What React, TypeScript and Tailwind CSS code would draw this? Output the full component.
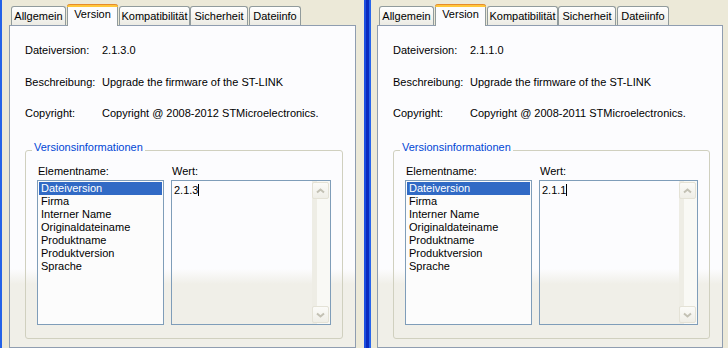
import React from "react";

type PanelProps = { ver: string; year: string; wert: string; wide: boolean };

const items = [
  "Dateiversion",
  "Firma",
  "Interner Name",
  "Originaldateiname",
  "Produktname",
  "Produktversion",
  "Sprache",
];

function Chevron({ down }: { down?: boolean }) {
  return (
    <svg width="9" height="6" viewBox="0 0 9 6" className="block">
      <path
        d={down ? "M1 1.5 L4.5 4.5 L8 1.5" : "M1 4.5 L4.5 1.5 L8 4.5"}
        fill="none"
        stroke="#c3c1b4"
        strokeWidth="2"
      />
    </svg>
  );
}

function ScrollBtn({ down }: { down?: boolean }) {
  return (
    <div className="flex h-[17px] w-[17px] items-center justify-center rounded-[2px] border border-[#e4e2d6] bg-[linear-gradient(to_bottom,#fbfbf8,#efeee7)]">
      <Chevron down={down} />
    </div>
  );
}

function TabRow() {
  const un =
    "flex h-[19px] items-center justify-center rounded-t-[3px] border border-b-0 border-[#919b9c] bg-[linear-gradient(to_bottom,#ffffff,#ecebe4)] leading-[13px]";
  return (
    <div className="flex h-[26px] items-end pl-[2px]">
      <div className={`${un} w-[55px]`}>Allgemein</div>
      <div className="relative z-10 -mb-px ml-px flex h-[22px] w-[51px] flex-col rounded-t-[3px] border-x border-[#919b9c] bg-[#fcfcfe]">
        <div className="-mx-px h-[3px] rounded-t-[3px] border-t border-[#e68b2c] bg-[#ffc73c]" />
        <div className="flex justify-center pt-px leading-[13px]">Version</div>
      </div>
      <div className={`${un} ml-px w-[71px]`}>Kompatibilität</div>
      <div className={`${un} w-[58px]`}>Sicherheit</div>
      <div className={`${un} ml-px w-[52px]`}>Dateiinfo</div>
    </div>
  );
}

function Panel({ ver, year, wert, wide }: PanelProps) {
  return (
    <div className={`flex shrink-0 flex-col ${wide ? "w-[347px]" : "w-[346px]"}`}>
      <TabRow />
      <div className="h-[330px] border border-[#8f9db0] bg-[linear-gradient(to_bottom,#fcfcfe_243px,#f0efe8_258px)]">
        <div className="flex flex-col pl-[15px] pt-[18px] leading-[13px]">
          <div className="flex">
            <div className="w-[77px]">Dateiversion:</div>
            <div>{ver}</div>
          </div>
          <div className="mt-[19px] flex">
            <div className="w-[77px]">Beschreibung:</div>
            <div>Upgrade the firmware of the ST-LINK</div>
          </div>
          <div className="mt-[18px] flex">
            <div className="w-[77px]">Copyright:</div>
            <div>Copyright @ 2008-{year} STMicroelectronics.</div>
          </div>
        </div>
        <div className="relative ml-[15px] mr-[12px] mt-[30px] h-[189px] rounded-[3px] border border-[#d0d0bf] px-[11px] pt-[14px]">
          <span className="absolute left-[6px] top-[-10px] bg-[#fcfcfe] px-[2px] leading-[13px] text-[#0046d5]">
            Versionsinformationen
          </span>
          <div className="flex gap-[7px]">
            <div className="w-[127px] shrink-0">
              <div className="mb-[2px] pl-px leading-[13px]">Elementname:</div>
              <div className="h-[145px] border border-[#7f9db9] bg-[#fcfcfc] px-px pt-px">
                {items.map((it, i) => (
                  <div
                    key={it}
                    className={`h-[13px] pl-[2px] leading-[13px] ${
                      i === 0 ? "bg-[#316ac5] text-white" : ""
                    }`}
                  >
                    {it}
                  </div>
                ))}
              </div>
            </div>
            <div className="min-w-0 flex-1">
              <div className="mb-[2px] pl-px leading-[13px]">Wert:</div>
              <div className="flex h-[145px] border border-[#7f9db9]">
                <div className="flex-1 pl-[2px] pt-[3px] leading-[13px]">
                  {wert}
                  <span className="inline-block h-[12px] w-px bg-black align-[-2px]" />
                </div>
                <div className="flex w-[18px] flex-col justify-between bg-[linear-gradient(to_right,#eeede5_5px,#f9f9f5_5px)] py-px pr-px">
                  <ScrollBtn />
                  <ScrollBtn down />
                </div>
              </div>
            </div>
          </div>
        </div>
      </div>
    </div>
  );
}

export default function App() {
  return (
    <div className="flex h-[348px] w-[728px] overflow-hidden bg-[#ece9d8] font-['Liberation_Sans',Arial,sans-serif] text-[11px] text-black">
      <div className="w-[2px] shrink-0 bg-[#2462e8]" />
      <div className="w-[7px] shrink-0" />
      <Panel ver="2.1.3.0" year="2012" wert="2.1.3" wide />
      <div className="w-[8px] shrink-0" />
      <div className="flex w-[7px] shrink-0">
        <div className="w-[2px] bg-[#1d4fdf]" />
        <div className="w-[3px] bg-[#0a2bbe]" />
        <div className="w-[2px] bg-[#2765ec]" />
      </div>
      <div className="w-[6px] shrink-0" />
      <Panel ver="2.1.1.0" year="2011" wert="2.1.1" wide={false} />
    </div>
  );
}
